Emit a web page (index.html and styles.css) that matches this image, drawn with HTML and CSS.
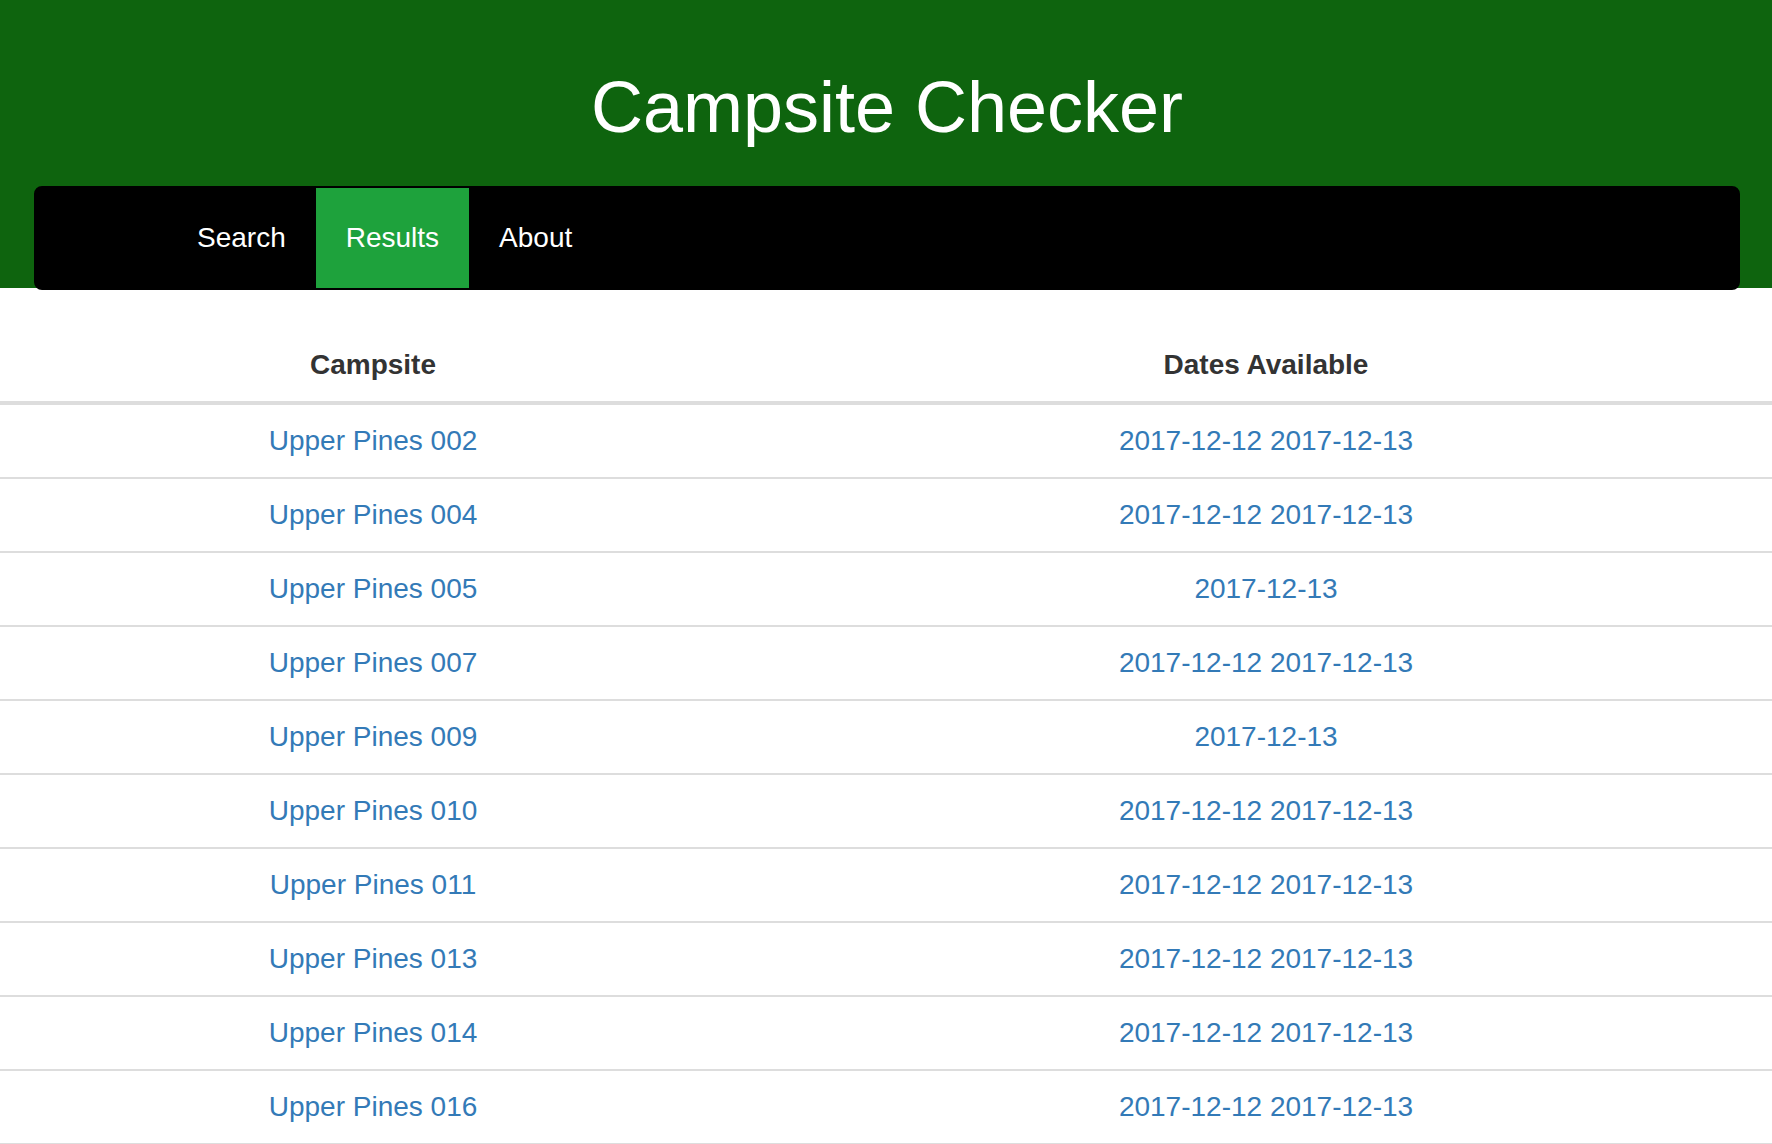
FILE: index.html
```html
<!DOCTYPE html>
<html lang="en">
<head>
<meta charset="utf-8">
<title>Campsite Checker</title>
<link rel="stylesheet" href="styles.css">
</head>
<body>
<header class="masthead">
  <h1 class="title">Campsite Checker</h1>
  <nav class="navbar">
    <ul class="nav">
      <li><a class="nav-link" href="#">Search</a></li>
      <li><a class="nav-link active" href="#">Results</a></li>
      <li><a class="nav-link" href="#">About</a></li>
    </ul>
  </nav>
</header>
<main>
  <table class="results">
    <thead>
      <tr><th class="col-site">Campsite</th><th class="col-dates">Dates Available</th></tr>
    </thead>
    <tbody>
      <tr><td class="col-site"><a href="#">Upper Pines 002</a></td><td class="col-dates"><a href="#">2017-12-12</a> <a href="#">2017-12-13</a></td></tr>
      <tr><td class="col-site"><a href="#">Upper Pines 004</a></td><td class="col-dates"><a href="#">2017-12-12</a> <a href="#">2017-12-13</a></td></tr>
      <tr><td class="col-site"><a href="#">Upper Pines 005</a></td><td class="col-dates"><a href="#">2017-12-13</a></td></tr>
      <tr><td class="col-site"><a href="#">Upper Pines 007</a></td><td class="col-dates"><a href="#">2017-12-12</a> <a href="#">2017-12-13</a></td></tr>
      <tr><td class="col-site"><a href="#">Upper Pines 009</a></td><td class="col-dates"><a href="#">2017-12-13</a></td></tr>
      <tr><td class="col-site"><a href="#">Upper Pines 010</a></td><td class="col-dates"><a href="#">2017-12-12</a> <a href="#">2017-12-13</a></td></tr>
      <tr><td class="col-site"><a href="#">Upper Pines 011</a></td><td class="col-dates"><a href="#">2017-12-12</a> <a href="#">2017-12-13</a></td></tr>
      <tr><td class="col-site"><a href="#">Upper Pines 013</a></td><td class="col-dates"><a href="#">2017-12-12</a> <a href="#">2017-12-13</a></td></tr>
      <tr><td class="col-site"><a href="#">Upper Pines 014</a></td><td class="col-dates"><a href="#">2017-12-12</a> <a href="#">2017-12-13</a></td></tr>
      <tr><td class="col-site"><a href="#">Upper Pines 016</a></td><td class="col-dates"><a href="#">2017-12-12</a> <a href="#">2017-12-13</a></td></tr>
    </tbody>
  </table>
</main>
</body>
</html>
```
FILE: styles.css
```css
html, body {
  margin: 0;
  padding: 0;
  background: #ffffff;
  font-family: "Liberation Sans", Arial, Helvetica, sans-serif;
  font-size: 28px;
  line-height: 40px;
  color: #333333;
}

.masthead {
  background: #0e640e;
  height: 288px;
  padding: 68px 32px 0 34px;
  box-sizing: border-box;
  display: flex;
  flex-direction: column;
}

.title {
  margin: 0 0 39px 0;
  font-size: 72px;
  line-height: 79px;
  font-weight: 400;
  color: #ffffff;
  text-align: center;
}

.navbar {
  background: #000000;
  border: 2px solid #000000;
  border-radius: 8px;
  height: 104px;
  box-sizing: border-box;
  flex: none;
}

.nav {
  list-style: none;
  margin: 0;
  padding: 0 0 0 131px;
  display: flex;
}

.nav-link {
  display: block;
  padding: 30px 30px;
  line-height: 40px;
  font-size: 28px;
  color: #ffffff;
  text-decoration: none;
}

.nav-link.active {
  background: #1ea23c;
}

main {
  padding-top: 41px;
}

.results {
  width: 100%;
  border-collapse: collapse;
  border-spacing: 0;
}

.results th,
.results td {
  padding: 16px;
  line-height: 40px;
  text-align: center;
  vertical-align: middle;
}

.results th {
  font-weight: 700;
  color: #333333;
  border-bottom: 4px solid #dddddd;
}

.results td {
  border-bottom: 2px solid #dddddd;
}

.results .col-site {
  width: 714px;
}

.results .col-dates {
  padding-left: 30px;
}

.results a {
  color: #337ab7;
  text-decoration: none;
}
```
